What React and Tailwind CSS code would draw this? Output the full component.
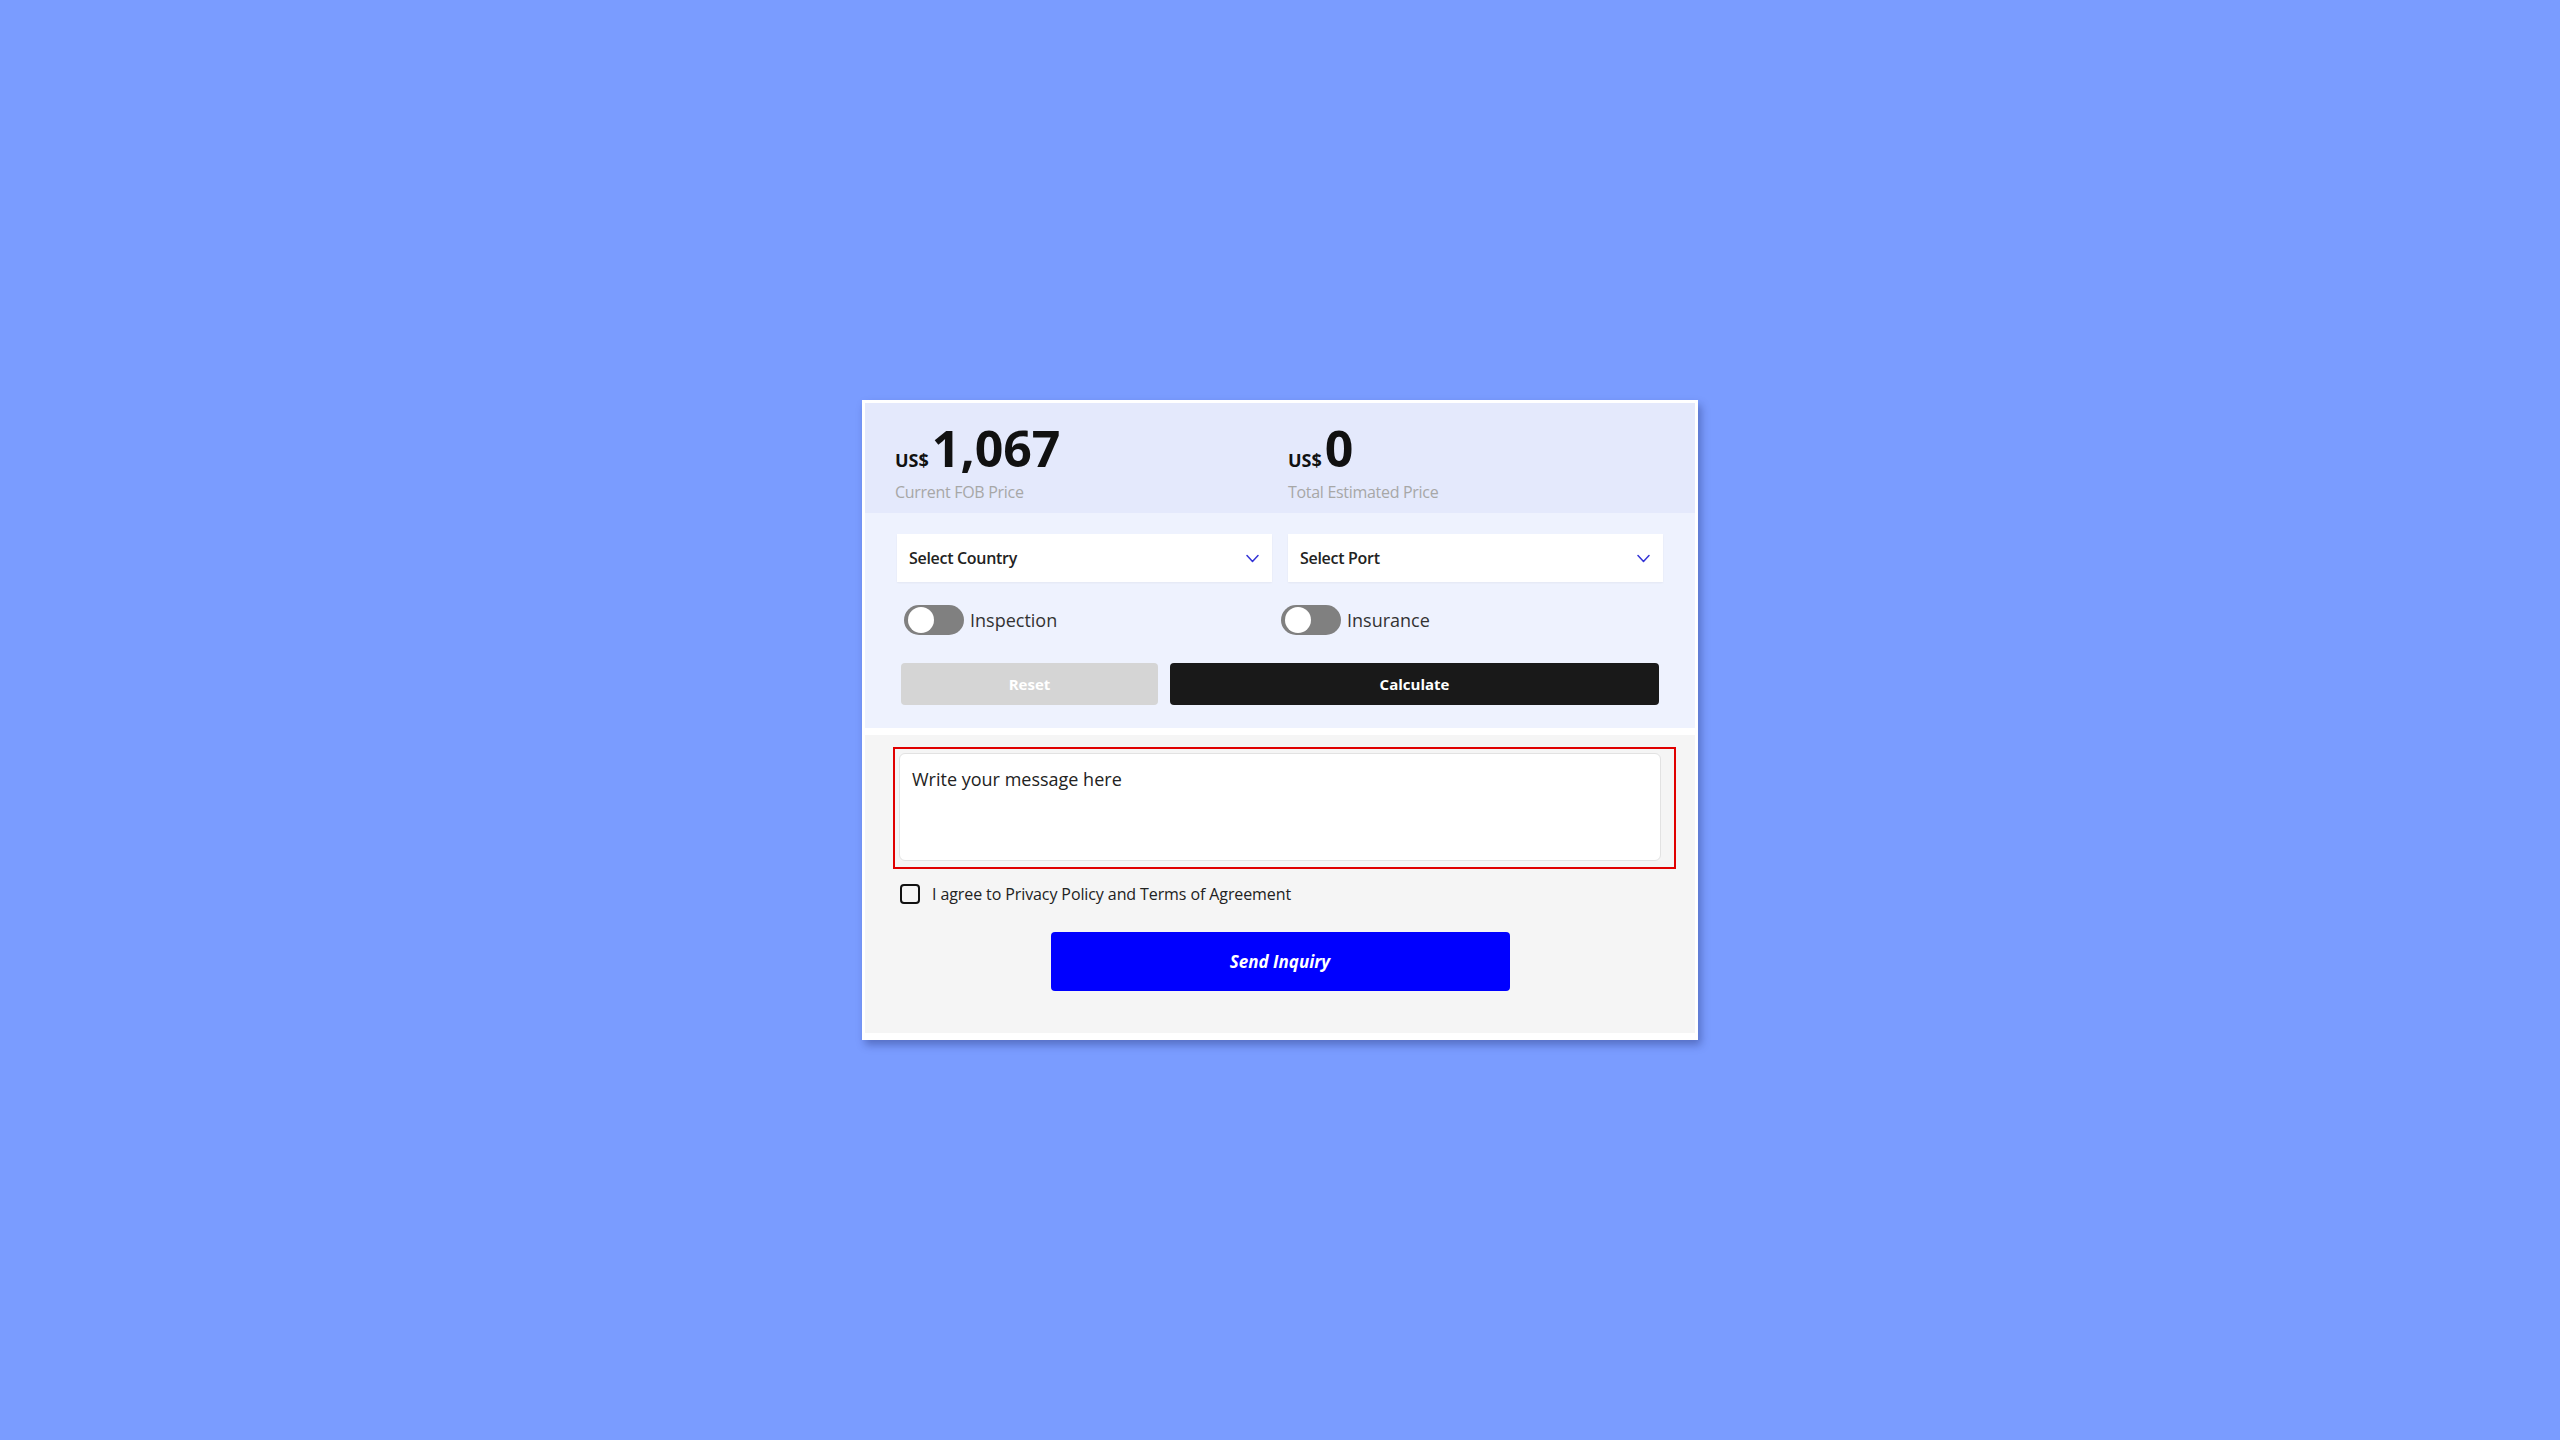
import React, { useState } from "react";

function Chevron() {
  return (
    <svg width="13" height="9" viewBox="0 0 13 9" fill="none" className="shrink-0">
      <polyline points="1,1.5 6.5,7.5 12,1.5" stroke="#3434d6" strokeWidth="1.5" strokeLinecap="round" strokeLinejoin="round" />
    </svg>
  );
}

function Toggle({ label, on, onChange }) {
  return (
    <button type="button" onClick={onChange} className="flex items-center gap-[6px]">
      <span className={`relative w-[60px] h-[30px] rounded-full ${on ? "bg-[#1a1a1a]" : "bg-[#808080]"}`}>
        <span className={`absolute top-[2px] w-[26px] h-[26px] rounded-full bg-white ${on ? "left-[30px]" : "left-[4px]"}`} />
      </span>
      <span className="text-[18px] leading-[28px] text-[#333]">{label}</span>
    </button>
  );
}

function PriceBlock({ amount, label }) {
  return (
    <div>
      <div className="flex items-baseline text-[#111] font-bold">
        <span className="text-[18px] leading-none mr-[3px]">US$</span>
        <span className="text-[50px] leading-none">{amount}</span>
      </div>
      <p className="mt-[7px] text-[16px] leading-[24px] text-[#a7a7a7] tracking-[-0.3px]">{label}</p>
    </div>
  );
}

export default function App() {
  const [inspection, setInspection] = useState(false);
  const [insurance, setInsurance] = useState(false);
  const [agree, setAgree] = useState(false);

  return (
    <div className="min-h-screen w-full bg-[#7a9cff] flex items-center justify-center" style={{ fontFamily: '"Open Sans", "Noto Sans", sans-serif' }}>
      <div className="w-[836px] bg-white p-[3px] pb-[7px] shadow-[3px_5px_8px_rgba(20,30,90,0.35)]">

        <div className="bg-[#e4e9fc] grid grid-cols-2 gap-4 px-[30px] pt-[20px] pb-[9px]">
          <PriceBlock amount="1,067" label="Current FOB Price" />
          <PriceBlock amount="0" label="Total Estimated Price" />
        </div>

        <div className="bg-[#eef2fe] px-[32px] pt-[21px] pb-[23px]">
          <div className="grid grid-cols-2 gap-4">
            <button type="button" className="h-12 bg-white flex items-center justify-between pl-3 pr-[13px] shadow-[0_1px_2px_rgba(0,0,0,0.05)]">
              <span className="text-[16px] font-semibold text-[#222] tracking-[-0.3px]">Select Country</span>
              <Chevron />
            </button>
            <button type="button" className="h-12 bg-white flex items-center justify-between pl-3 pr-[13px] shadow-[0_1px_2px_rgba(0,0,0,0.05)]">
              <span className="text-[16px] font-semibold text-[#222] tracking-[-0.3px]">Select Port</span>
              <Chevron />
            </button>
          </div>

          <div className="mt-[23px] ml-[7px] w-[754px] grid grid-cols-2">
            <Toggle label="Inspection" on={inspection} onChange={() => setInspection(!inspection)} />
            <Toggle label="Insurance" on={insurance} onChange={() => setInsurance(!insurance)} />
          </div>

          <div className="mt-[28px] px-[4px] flex gap-3">
            <button type="button" className="w-[257px] h-[42px] rounded bg-[#d5d5d5] text-white text-[15px] font-bold">Reset</button>
            <button type="button" className="flex-1 h-[42px] rounded bg-[#191919] text-white text-[15px] font-bold">Calculate</button>
          </div>
        </div>

        <div className="mt-[7px] bg-[#f5f5f5] pl-[28px] pt-[12px] pb-[42px]">
          <div className="w-[783px] h-[122px] border-2 border-[#e00000] pl-[4px] pt-[4px]">
            <textarea
              placeholder="Write your message here"
              className="w-[762px] h-[108px] resize-none bg-white border border-[#e2e2e2] rounded-md px-3 pt-[11px] text-[18px] leading-[28px] text-[#222] placeholder:text-[#222] outline-none"
            />
          </div>

          <label className="mt-[13px] ml-[7px] flex items-center gap-3 cursor-pointer">
            <span
              onClick={() => setAgree(!agree)}
              className={`w-5 h-5 rounded-[4px] border-2 border-[#111] ${agree ? "bg-[#111]" : "bg-transparent"}`}
            />
            <span className="text-[16px] leading-[24px] text-[#222] tracking-[-0.1px]">I agree to Privacy Policy and Terms of Agreement</span>
          </label>

          <div className="mt-[26px] flex justify-center pr-[28px]">
            <button type="button" className="w-[459px] h-[59px] rounded bg-[#0000ff] text-white text-[17px] font-bold italic">Send Inquiry</button>
          </div>
        </div>

      </div>
    </div>
  );
}
